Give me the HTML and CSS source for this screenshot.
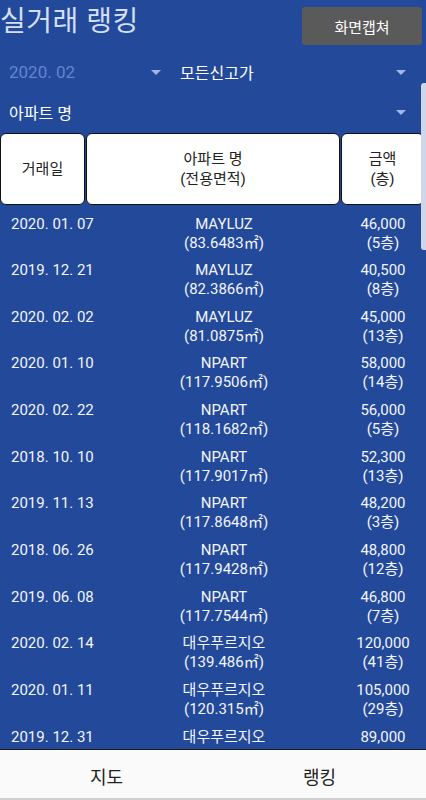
FILE: index.html
```html
<!DOCTYPE html>
<html lang="ko">
<head>
    <meta charset="UTF-8">
    <title>실거래 랭킹</title>
    <link rel="stylesheet" href="styles.css">
</head>
<body>

<div class="app">
    <div class="topbar">
        <h1 class="title">실거래 랭킹</h1>
        <button class="capture">화면캡쳐</button>
    </div>

    <div class="filters">
        <div class="select month">
            <span>2020. 02</span>
            <i class="caret"></i>
        </div>
        <div class="select kind">
            <span>모든신고가</span>
            <i class="caret"></i>
        </div>
    </div>

    <div class="filters">
        <div class="select apt">
            <span>아파트 명</span>
            <i class="caret"></i>
        </div>
    </div>

    <div class="table-head">
        <div class="cell">거래일</div>
        <div class="cell">아파트 명<br>(전용면적)</div>
        <div class="cell">금액<br>(층)</div>
    </div>

    <div class="list">
        <div class="row"><div class="date">2020. 01. 07</div><div class="name">MAYLUZ<br>(83.6483㎡)</div><div class="price">46,000<br>(5층)</div></div>
        <div class="row"><div class="date">2019. 12. 21</div><div class="name">MAYLUZ<br>(82.3866㎡)</div><div class="price">40,500<br>(8층)</div></div>
        <div class="row"><div class="date">2020. 02. 02</div><div class="name">MAYLUZ<br>(81.0875㎡)</div><div class="price">45,000<br>(13층)</div></div>
        <div class="row"><div class="date">2020. 01. 10</div><div class="name">NPART<br>(117.9506㎡)</div><div class="price">58,000<br>(14층)</div></div>
        <div class="row"><div class="date">2020. 02. 22</div><div class="name">NPART<br>(118.1682㎡)</div><div class="price">56,000<br>(5층)</div></div>
        <div class="row"><div class="date">2018. 10. 10</div><div class="name">NPART<br>(117.9017㎡)</div><div class="price">52,300<br>(13층)</div></div>
        <div class="row"><div class="date">2019. 11. 13</div><div class="name">NPART<br>(117.8648㎡)</div><div class="price">48,200<br>(3층)</div></div>
        <div class="row"><div class="date">2018. 06. 26</div><div class="name">NPART<br>(117.9428㎡)</div><div class="price">48,800<br>(12층)</div></div>
        <div class="row"><div class="date">2019. 06. 08</div><div class="name">NPART<br>(117.7544㎡)</div><div class="price">46,800<br>(7층)</div></div>
        <div class="row"><div class="date">2020. 02. 14</div><div class="name">대우푸르지오<br>(139.486㎡)</div><div class="price">120,000<br>(41층)</div></div>
        <div class="row"><div class="date">2020. 01. 11</div><div class="name">대우푸르지오<br>(120.315㎡)</div><div class="price">105,000<br>(29층)</div></div>
        <div class="row"><div class="date">2019. 12. 31</div><div class="name">대우푸르지오</div><div class="price">89,000</div></div>
    </div>

    <div class="tabbar">
        <div class="tab">지도</div>
        <div class="tab">랭킹</div>
    </div>

    <!-- 스크롤바 -->
    <div class="scroll-thumb"></div>
</div>

</body>
</html>
```

FILE: styles.css
```css
body {
    margin: 0;
    background: #23499b;
    font-family: Roboto, "Noto Sans CJK KR", sans-serif;
}

.app {
    position: relative;
    height: 800px;
    display: flex;
    flex-direction: column;
    overflow: hidden;
}

.topbar {
    height: 52px;
    display: flex;
    justify-content: space-between;
    align-items: flex-start;
}

.title {
    margin: 0;
    font-size: 28px;
    font-weight: normal;
    line-height: 44px;
    color: #d3dff4;
    letter-spacing: 0.5px;
}

.capture {
    margin: 7px 4px 0 0;
    width: 120px;
    height: 38px;
    border: none;
    border-radius: 3px;
    background: #5a5a5a;
    color: #fff;
    font-family: inherit;
    font-size: 15px;
}

.filters {
    display: flex;
    height: 40px;
}

.select {
    display: flex;
    align-items: center;
    justify-content: space-between;
    font-size: 16px;
    color: #fff;
}

.select.month {
    width: 152px;
    padding-left: 9px;
    color: #6485cb;
    font-size: 17px;
}

.select.kind {
    flex: 1;
    margin-left: 19px;
    padding-right: 20px;
}

.select.apt {
    flex: 1;
    padding-left: 9px;
    padding-right: 20px;
}

.caret {
    width: 0;
    height: 0;
    border-left: 5px solid transparent;
    border-right: 5px solid transparent;
    border-top: 5px solid #9fb6e6;
}

.table-head {
    display: grid;
    grid-template-columns: 85px 254px 83px;
    gap: 1px;
    height: 72px;
    margin-top: 1px;
}

.cell {
    display: flex;
    align-items: center;
    justify-content: center;
    text-align: center;
    background: #fff;
    border: 1px solid #111;
    border-radius: 6px;
    font-size: 15px;
    line-height: 20px;
    color: #222;
}

.list {
    flex: 1;
    overflow: hidden;
}

.row {
    display: grid;
    grid-template-columns: 108px 232px 86px;
    height: 46.67px;
    padding-top: 9.5px;
    box-sizing: border-box;
    font-size: 15px;
    line-height: 19px;
    color: #f2f5fc;
}

.date {
    padding-left: 11px;
}

.name,
.price {
    text-align: center;
}

.tabbar {
    display: flex;
    height: 51px;
    box-sizing: border-box;
    background: #fafafa;
    border-top: 1px solid #1a1a1a;
    border-bottom: 2px solid #d0d0d0;
}

.tab {
    flex: 1;
    display: flex;
    align-items: center;
    justify-content: center;
    padding-top: 4px;
    font-size: 18px;
    color: #222;
}

.scroll-thumb {
    position: absolute;
    right: 0;
    top: 83px;
    width: 5px;
    height: 167px;
    border-radius: 3px 0 0 3px;
    background: #cfd6ea;
}
```
